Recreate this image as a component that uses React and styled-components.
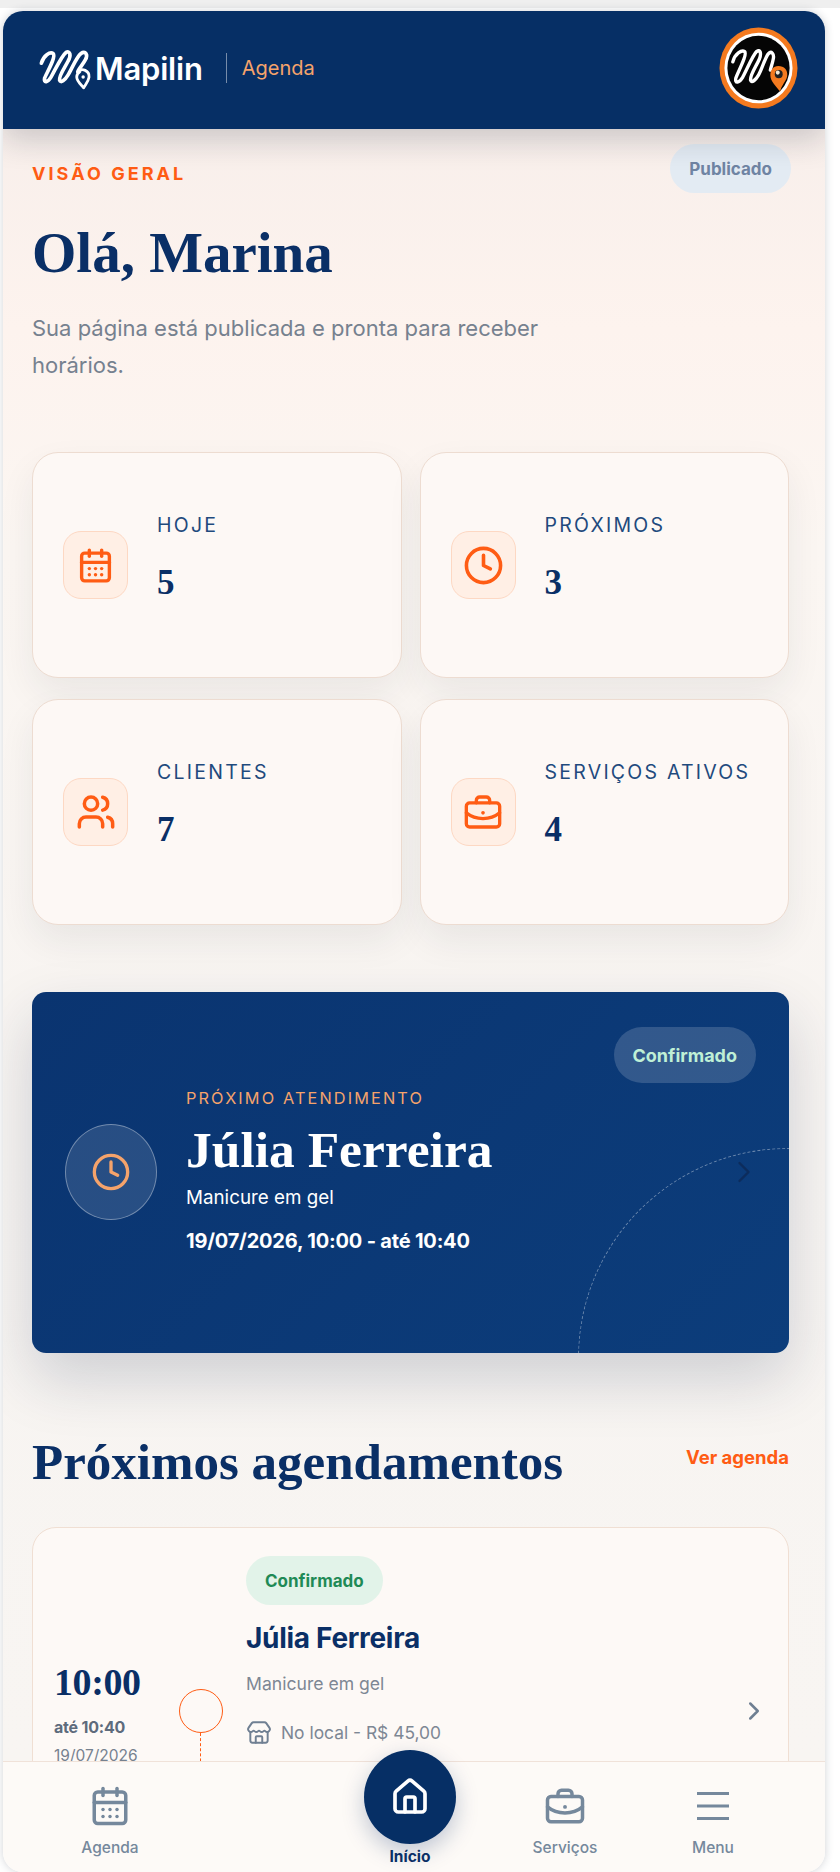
import React from "react"
import styled, { createGlobalStyle } from "styled-components"
import { CalendarDays, ChevronRight, Clock, House, Store, Users } from "lucide-react"

const navy = "#0a2f66"
const orange = "#ff5c14"
const peach = "#f5a36b"
const sans = `"Inter", "Liberation Sans", sans-serif`
const serif = `"Liberation Serif", "Times New Roman", serif`

const GlobalStyle = createGlobalStyle`
  html, body {
    margin: 0;
    padding: 0;
    background: #fff;
    font-family: ${sans};
  }
  * {
    box-sizing: border-box;
  }
`

const Page = styled.div`
  height: 1872px;
  padding: 11px 15px 0 3px;
  overflow: hidden;
  background: linear-gradient(180deg, #efefef 0, #efefef 8px, #fff 8px);
`

const Frame = styled.div`
  height: 1861px;
  display: flex;
  flex-direction: column;
  border-radius: 20px;
  overflow: hidden;
  box-shadow: 0 0 8px rgba(40, 50, 70, 0.22);
`

const Header = styled.header`
  position: relative;
  z-index: 2;
  flex: none;
  height: 118px;
  padding: 0 27px 4px 34px;
  display: flex;
  align-items: center;
  justify-content: space-between;
  background: #062f65;
  box-shadow: 0 10px 30px rgba(20, 30, 50, 0.2);
`

const Brand = styled.div`
  display: flex;
  align-items: center;
`

const Wordmark = styled.span`
  font-size: 31px;
  font-weight: 600;
  letter-spacing: -0.2px;
  color: #fff;
`

const Divider = styled.span`
  width: 1px;
  height: 30px;
  margin: 0 15px 0 23px;
  background: rgba(255, 255, 255, 0.45);
`

const Section = styled.span`
  font-size: 20px;
  color: ${peach};
`

const Main = styled.main`
  flex: 1;
  min-height: 0;
  overflow: hidden;
  padding: 15px 36px 0 29px;
  background: linear-gradient(180deg, #f8efeb 0, #fdf3ee 200px, #fbf6f2 420px, #f7f4f1 1000px, #f8f5f2 100%);
`

const TopRow = styled.div`
  display: flex;
  justify-content: space-between;
  align-items: flex-start;
  margin-right: -2px;
`

const Eyebrow = styled.div`
  margin-top: 19px;
  font-size: 18px;
  font-weight: 700;
  letter-spacing: 0.17em;
  color: ${orange};
`

const StatusPill = styled.span`
  height: ${(p) => (p.$large ? 56 : 49)}px;
  padding: 0 19px;
  display: inline-flex;
  align-items: center;
  border-radius: 28px;
  font-size: ${(p) => (p.$large ? 18 : 17)}px;
  font-weight: 700;
  color: ${(p) => p.$color};
  background: ${(p) => p.$bg};
`

const Title = styled.h1`
  margin: 29px 0 0;
  font-family: ${serif};
  font-size: 57px;
  line-height: 62px;
  font-weight: 700;
  color: ${navy};
`

const Lead = styled.p`
  margin: 26px 0 0;
  max-width: 520px;
  font-size: 22px;
  line-height: 37px;
  color: #76818f;
`

const StatGrid = styled.div`
  margin-top: 68px;
  display: grid;
  grid-template-columns: 1fr 1fr;
  grid-auto-rows: 226px;
  gap: 21px 18px;
`

const StatCard = styled.div`
  padding: 0 20px 0 30px;
  display: flex;
  align-items: center;
  gap: 29px;
  background: #fdf8f5;
  border: 1px solid #eddcd1;
  border-radius: 26px;
  box-shadow: 0 16px 36px rgba(30, 40, 60, 0.07);
`

const StatIcon = styled.div`
  flex: none;
  width: 65px;
  height: 68px;
  display: flex;
  align-items: center;
  justify-content: center;
  color: ${orange};
  background: #ffefe5;
  border: 1px solid #fdd8c3;
  border-radius: 18px;
`

const StatBody = styled.div`
  margin-top: -14px;
`

const StatLabel = styled.div`
  font-size: 19.500px;
  letter-spacing: 0.115em;
  white-space: nowrap;
  color: #1f4a7d;
`

const StatValue = styled.div`
  margin-top: 26px;
  font-family: ${serif};
  font-size: 35px;
  line-height: 40px;
  font-weight: 700;
  color: ${navy};
`

const HeroWrap = styled.div`
  margin-top: 67px;
  border-radius: 14px;
  box-shadow: 0 26px 60px rgba(20, 40, 80, 0.18);
`

const Hero = styled.section`
  position: relative;
  height: 361px;
  padding: 0 27px 0 33px;
  display: flex;
  align-items: center;
  gap: 29px;
  overflow: hidden;
  color: #fff;
  background: linear-gradient(135deg, #0a3470 0%, #0c3d7b 100%);
  border-radius: 14px;
`

const HeroArc = styled.div`
  position: absolute;
  left: 546px;
  top: 156px;
  width: 420px;
  height: 420px;
  border: 1px dashed rgba(255, 255, 255, 0.38);
  border-radius: 50%;
`

const HeroBadge = styled.div`
  position: absolute;
  top: 35px;
  right: 33px;
`

const HeroArrow = styled.div`
  position: absolute;
  right: 27px;
  top: 162px;
  color: #0c2c5c;
  line-height: 0;
`

const HeroCircle = styled.div`
  flex: none;
  width: 92px;
  height: 96px;
  margin-top: -2px;
  display: flex;
  align-items: center;
  justify-content: center;
  color: ${peach};
  background: rgba(255, 255, 255, 0.12);
  border: 1px solid rgba(255, 255, 255, 0.35);
  border-radius: 50%;
`

const HeroBody = styled.div`
  margin-top: -3px;
`

const HeroEyebrow = styled.div`
  font-size: 16.300px;
  line-height: 18px;
  letter-spacing: 0.13em;
  color: ${peach};
`

const HeroName = styled.div`
  margin-top: 12px;
  font-family: ${serif};
  font-size: 51.500px;
  line-height: 62px;
  font-weight: 700;
`

const HeroService = styled.div`
  margin-top: 5px;
  font-size: 18.800px;
  line-height: 24px;
`

const HeroWhen = styled.div`
  margin-top: 19px;
  font-size: 20px;
  line-height: 24px;
  font-weight: 700;
  letter-spacing: -0.2px;
`

const SectionRow = styled.div`
  margin-top: 76px;
  display: flex;
  justify-content: space-between;
  align-items: center;
`

const SectionTitle = styled.h2`
  margin: 0;
  font-family: ${serif};
  font-size: 51px;
  line-height: 66px;
  font-weight: 700;
  color: ${navy};
`

const SeeAll = styled.a`
  margin-top: -10px;
  font-size: 18.500px;
  font-weight: 700;
  color: ${orange};
`

const BookingCard = styled.article`
  height: 368px;
  margin-top: 32px;
  padding: 28px 19px 0 21px;
  display: flex;
  align-items: center;
  background: #fdf9f6;
  border: 1px solid #f0dfd3;
  border-radius: 24px;
`

const TimeCol = styled.div`
  flex: none;
  width: 125px;
  margin-top: -24px;
`

const TimeMain = styled.div`
  font-family: ${serif};
  font-size: 38px;
  line-height: 44px;
  font-weight: 700;
  letter-spacing: -0.4px;
  color: ${navy};
`

const TimeEnd = styled.div`
  margin-top: 12px;
  font-size: 16px;
  line-height: 22px;
  font-weight: 700;
  letter-spacing: -0.2px;
  color: #5d6b7c;
`

const TimeDate = styled.div`
  margin-top: 7px;
  font-size: 15.500px;
  line-height: 22px;
  color: #76818f;
`

const Dot = styled.div`
  position: relative;
  flex: none;
  width: 44px;
  height: 44px;
  margin-top: -28px;
  border: 1.500px solid ${orange};
  border-radius: 50%;

  &::after {
    content: "";
    position: absolute;
    left: 20px;
    top: 43px;
    height: 120px;
    border-left: 1.500px dashed ${orange};
  }
`

const BookingBody = styled.div`
  flex: 1;
  align-self: flex-start;
  margin-left: 23px;
`

const BookingName = styled.div`
  margin-top: 15px;
  font-size: 28px;
  line-height: 36px;
  font-weight: 700;
  letter-spacing: -0.3px;
  color: ${navy};
`

const BookingService = styled.div`
  margin-top: 16px;
  font-size: 17.600px;
  line-height: 24px;
  color: #7d8794;
`

const BookingMeta = styled.div`
  margin-top: 24px;
  display: flex;
  align-items: center;
  gap: 9px;
  font-size: 17.400px;
  line-height: 24px;
  color: #7d8794;
`

const RowArrow = styled.div`
  flex: none;
  margin-top: -28px;
  color: #6f7f92;
  line-height: 0;
`

const Nav = styled.nav`
  position: relative;
  z-index: 3;
  flex: none;
  height: 111px;
  padding-left: 47px;
  display: flex;
  align-items: flex-start;
  background: #fdfaf7;
  border-top: 1px solid #f0e2d9;
`

const NavItem = styled.a`
  width: 120px;
  margin-left: ${(p) => p.$offset || 0}px;
  padding-top: 25px;
  display: flex;
  flex-direction: column;
  align-items: center;
  color: #75889c;
`

const NavIconBox = styled.div`
  height: 38px;
  display: flex;
  align-items: center;
  justify-content: center;
`

const NavLabel = styled.span`
  margin-top: 13px;
  font-size: 15.500px;
  line-height: 20px;
  font-weight: 500;
`

const NavHome = styled.a`
  width: 120px;
  margin-left: 180px;
  margin-top: -12px;
  display: flex;
  flex-direction: column;
  align-items: center;
  color: ${navy};
`

const HomeCircle = styled.div`
  width: 92px;
  height: 94px;
  display: flex;
  align-items: center;
  justify-content: center;
  color: #fff;
  background: #062f65;
  border-radius: 50%;
  box-shadow: 0 8px 22px rgba(10, 47, 102, 0.25);
`

const HomeLabel = styled.span`
  margin-top: 3px;
  font-size: 15.500px;
  line-height: 20px;
  font-weight: 700;
`

const scribble =
  "M4 16C6 9 12 5 15 7C18 10 9 25 7 30C6 35 10 34 13 29C17 22 23 9 27 6C31 4 32 9 29 14C26 20 20 28 21 32C22 35 26 32 29 27C33 20 37 10 41 7C45 4 48 8 45 13C43 17 39 21 38 24"

const LogoMark = () => (
  <svg width="58" height="45" viewBox="0 0 54 42" fill="none" stroke="#fff" strokeWidth="3.400" strokeLinecap="round" strokeLinejoin="round">
    <path d={scribble} />
    <path d="M38 24C42 20 49 23 48.500 29C48 33 45 36 43.500 39C41 36 37 33 37 29C37 27 38 25 40 24" strokeWidth="2.600" />
    <circle cx="43" cy="29" r="1.600" fill="#fff" stroke="none" />
  </svg>
)

const Avatar = () => (
  <svg width="79" height="82" viewBox="0 0 80 80" preserveAspectRatio="none">
    <circle cx="40" cy="40" r="39.500" fill="#f47a1f" />
    <circle cx="40" cy="40" r="34.500" fill="#fff" />
    <circle cx="40" cy="40" r="31.500" fill="#050505" />
    <path
      d="M14 34C16 26 23 22 26 24C29 27 19 44 17 50C16 55 20 55 24 49C28 42 34 28 38 24C42 21 43 26 41 31C38 38 31 47 32 52C33 55 37 52 40 47C44 40 47 29 50 26C53 23 56 26 55 31C54 36 53 38 52 42"
      fill="none"
      stroke="#fff"
      strokeWidth="3.400"
      strokeLinecap="round"
    />
    <path d="M60 38C66 38 70 42 69 48C68 53 63 57 62 63C58 58 52 53 52 47C52 42 55 38 60 38Z" fill="#f47a1f" />
    <circle cx="60.500" cy="46" r="4" fill="#222" />
    <circle cx="59.500" cy="44.500" r="2" fill="#f3ead8" />
  </svg>
)

const Briefcase = ({ size }) => (
  <svg width={size} height={size} viewBox="0 0 24 24" fill="none" stroke="currentColor" strokeWidth="2" strokeLinecap="round" strokeLinejoin="round">
    <rect x="2" y="6.500" width="20" height="14.500" rx="2" />
    <path d="M8 6.500V5a2 2 0 0 1 2-2h4a2 2 0 0 1 2 2v1.500" />
    <path d="M2 12.500c3 2.500 6.500 3.500 10 3.500s7-1 10-3.500" />
    <path d="M12 12.500h.01" strokeWidth="2.200" />
  </svg>
)

const MenuLines = () => (
  <svg width="34" height="30" viewBox="0 0 34 30" fill="none" stroke="currentColor" strokeWidth="3.200">
    <path d="M1 2.500h32M1 15h32M1 27.500h32" />
  </svg>
)

const stats = [
  { label: "HOJE", value: "5", icon: <CalendarDays size={37} strokeWidth={2.2} /> },
  { label: "PRÓXIMOS", value: "3", icon: <Clock size={41} strokeWidth={2.1} /> },
  { label: "CLIENTES", value: "7", icon: <Users size={40} strokeWidth={2.1} /> },
  { label: "SERVIÇOS ATIVOS", value: "4", icon: <Briefcase size={40} /> },
]

const App = () => (
  <>
    <GlobalStyle />
    <Page>
      <Frame>
        <Header>
          <Brand>
            <LogoMark />
            <Wordmark>Mapilin</Wordmark>
            <Divider />
            <Section>Agenda</Section>
          </Brand>
          <Avatar />
        </Header>

        <Main>
          <TopRow>
            <Eyebrow>VISÃO GERAL</Eyebrow>
            <StatusPill $color="#6f84a3" $bg="#e3ebf3">Publicado</StatusPill>
          </TopRow>
          <Title>Olá, Marina</Title>
          <Lead>Sua página está publicada e pronta para receber horários.</Lead>

          <StatGrid>
            {stats.map((s) => (
              <StatCard key={s.label}>
                <StatIcon>{s.icon}</StatIcon>
                <StatBody>
                  <StatLabel>{s.label}</StatLabel>
                  <StatValue>{s.value}</StatValue>
                </StatBody>
              </StatCard>
            ))}
          </StatGrid>

          <HeroWrap>
            <Hero>
              <HeroArc />
              <HeroBadge>
                <StatusPill $large $color="#bff0d6" $bg="rgba(255,255,255,0.16)">Confirmado</StatusPill>
              </HeroBadge>
              <HeroArrow>
                <ChevronRight size={36} strokeWidth={1.6} />
              </HeroArrow>
              <HeroCircle>
                <Clock size={40} strokeWidth={2} />
              </HeroCircle>
              <HeroBody>
                <HeroEyebrow>PRÓXIMO ATENDIMENTO</HeroEyebrow>
                <HeroName>Júlia Ferreira</HeroName>
                <HeroService>Manicure em gel</HeroService>
                <HeroWhen>19/07/2026, 10:00 - até 10:40</HeroWhen>
              </HeroBody>
            </Hero>
          </HeroWrap>

          <SectionRow>
            <SectionTitle>Próximos agendamentos</SectionTitle>
            <SeeAll>Ver agenda</SeeAll>
          </SectionRow>

          <BookingCard>
            <TimeCol>
              <TimeMain>10:00</TimeMain>
              <TimeEnd>até 10:40</TimeEnd>
              <TimeDate>19/07/2026</TimeDate>
            </TimeCol>
            <Dot />
            <BookingBody>
              <StatusPill $color="#1f8a56" $bg="#e2f3e9">Confirmado</StatusPill>
              <BookingName>Júlia Ferreira</BookingName>
              <BookingService>Manicure em gel</BookingService>
              <BookingMeta>
                <Store size={26} strokeWidth={1.8} color="#6f7f92" />
                No local - R$ 45,00
              </BookingMeta>
            </BookingBody>
            <RowArrow>
              <ChevronRight size={30} strokeWidth={2} />
            </RowArrow>
          </BookingCard>
        </Main>

        <Nav>
          <NavItem>
            <NavIconBox>
              <CalendarDays size={42} strokeWidth={2} />
            </NavIconBox>
            <NavLabel>Agenda</NavLabel>
          </NavItem>
          <NavHome>
            <HomeCircle>
              <House size={40} strokeWidth={2.2} />
            </HomeCircle>
            <HomeLabel>Início</HomeLabel>
          </NavHome>
          <NavItem $offset={35}>
            <NavIconBox>
              <Briefcase size={42} />
            </NavIconBox>
            <NavLabel>Serviços</NavLabel>
          </NavItem>
          <NavItem $offset={28}>
            <NavIconBox>
              <MenuLines />
            </NavIconBox>
            <NavLabel>Menu</NavLabel>
          </NavItem>
        </Nav>
      </Frame>
    </Page>
  </>
)

export default App
